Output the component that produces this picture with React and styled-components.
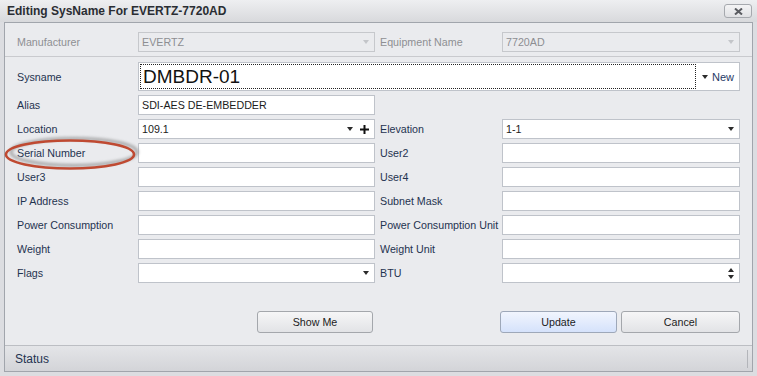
import React from "react";
import styled, { createGlobalStyle } from "styled-components";

const GlobalStyle = createGlobalStyle`
  html, body {
    margin: 0;
    padding: 0;
    background: #dfe0e3;
  }
  body {
    font-family: "Liberation Sans", Arial, sans-serif;
    font-size: 10.7px;
  }
`;

const Window = styled.div`
  position: relative;
  width: 757px;
  height: 376px;
  display: flex;
  flex-direction: column;
  background: #dcdde1;
  overflow: hidden;
`;

const TitleBar = styled.div`
  height: 22px;
  flex: none;
  display: flex;
  align-items: center;
  padding-left: 7px;
  background: linear-gradient(#eeeff1, #d8d9dc);
  color: #2a2d33;
  font-weight: bold;
  font-size: 12px;
`;

const CloseButton = styled.div`
  margin-left: auto;
  margin-right: 5px;
  width: 28px;
  height: 14px;
  box-sizing: border-box;
  border: 1px solid #a6a9ae;
  border-radius: 3px;
  background: linear-gradient(#f4f4f5, #e0e1e4);
  display: flex;
  align-items: center;
  justify-content: center;
`;

const Client = styled.div`
  flex: 1;
  margin: 0 4px 4px 4px;
  border: 1px solid #a1a5ac;
  background: #eaebee;
  display: flex;
  flex-direction: column;
`;

const TopPanel = styled.div`
  padding: 9px 12px 4px 12px;
  border-bottom: 1px solid #c9cace;
`;

const Form = styled.div`
  padding: 5px 12px 0 12px;
  display: flex;
  flex-direction: column;
  gap: 4px;
`;

const Row = styled.div`
  display: flex;
  align-items: center;
  gap: ${(p) => (p.$tight ? 0 : 5)}px;
`;

const Half = styled.div`
  display: flex;
  align-items: center;
  width: ${(p) => (p.$right ? 360 : 358)}px;
`;

const Label = styled.div`
  width: ${(p) => (p.$right ? 122 : 121)}px;
  flex: none;
  color: ${(p) => (p.$disabled ? "#8e8f93" : "#1f3350")};
  white-space: nowrap;
`;

const Field = styled.div`
  flex: 1;
  height: 20px;
  box-sizing: border-box;
  border: 1px solid ${(p) => (p.$disabled ? "#c6c8cc" : "#bfc3ca")};
  background: ${(p) => (p.$disabled ? "#eaebee" : "#ffffff")};
  color: ${(p) => (p.$disabled ? "#8d8e92" : "#1b1b1b")};
  display: flex;
  align-items: center;
  padding: 0 5px 0 3px;
  gap: 7px;
`;

const FieldText = styled.span`
  flex: 1;
  white-space: nowrap;
`;

const Caret = styled.span`
  width: 0;
  height: 0;
  border-left: 3.5px solid transparent;
  border-right: 3.5px solid transparent;
  ${(p) =>
    p.$up
      ? "border-bottom: 4px solid #2b2b2b;"
      : `border-top: 4px solid ${p.$disabled ? "#c3c5c9" : "#2b2b2b"};`}
`;

const Spin = styled.span`
  display: flex;
  flex-direction: column;
  gap: 3px;
`;

const SysField = styled.div`
  width: 602px;
  height: 29px;
  flex: none;
  box-sizing: border-box;
  border: 1px solid #bfc3ca;
  background: #fff;
  display: flex;
  align-items: stretch;
`;

const SysInput = styled.div`
  flex: 1;
  margin: 1px 0 1px 1px;
  outline: 1px dotted #222;
  outline-offset: -1px;
  display: flex;
  align-items: center;
  padding-left: 3px;
  font-size: 19px;
  color: #111;
`;

const NewButton = styled.div`
  width: 43px;
  flex: none;
  display: flex;
  align-items: center;
  gap: 4px;
  padding-left: 6px;
  box-sizing: border-box;
  color: #1f3a66;
  font-size: 11px;
`;

const ButtonRow = styled.div`
  margin-top: 28px;
  padding: 0 12px;
  display: flex;
  gap: 5px;
`;

const ButtonGroup = styled.div`
  width: ${(p) => p.$w}px;
  display: flex;
  justify-content: flex-end;
  gap: 4px;
  padding-right: ${(p) => p.$pr || 0}px;
  box-sizing: border-box;
`;

const Button = styled.div`
  width: ${(p) => p.$w || 117}px;
  height: 22px;
  box-sizing: border-box;
  border: 1px solid ${(p) => (p.$primary ? "#9ea8b9" : "#a4a7ac")};
  border-radius: 3px;
  background: ${(p) =>
    p.$primary
      ? "linear-gradient(#f1f5fe, #d5e2fb)"
      : "linear-gradient(#f6f6f7, #e2e3e6)"};
  display: flex;
  align-items: center;
  justify-content: center;
  color: #1c1c1c;
`;

const StatusBar = styled.div`
  margin-top: auto;
  height: 26px;
  box-sizing: border-box;
  border-top: 1px solid #bcbec3;
  background: linear-gradient(#e4e5e8, #d3d4d8);
  display: flex;
  align-items: center;
  padding: 0 4px 0 10px;
  color: #1f3350;
  font-size: 12px;
`;

const Grip = styled.div`
  margin-left: auto;
  width: 1px;
  height: 18px;
  background: #b3b5ba;
`;

const Annotation = styled.svg`
  position: absolute;
  left: 0;
  top: 134px;
  pointer-events: none;
`;

function Plus() {
  return (
    <svg width="9" height="9" viewBox="0 0 9 9">
      <rect x="3.5" y="0" width="2" height="9" fill="#111" />
      <rect x="0" y="3.5" width="9" height="2" fill="#111" />
    </svg>
  );
}

function TextRow({ left, right, leftValue, rightValue, leftCaret, rightCaret, rightSpin }) {
  return (
    <Row>
      <Half>
        <Label>{left}</Label>
        <Field>
          <FieldText>{leftValue}</FieldText>
          {leftCaret && <Caret />}
        </Field>
      </Half>
      {right && (
        <Half $right>
          <Label $right>{right}</Label>
          <Field>
            <FieldText>{rightValue}</FieldText>
            {rightCaret && <Caret />}
            {rightSpin && (
              <Spin>
                <Caret $up />
                <Caret />
              </Spin>
            )}
          </Field>
        </Half>
      )}
    </Row>
  );
}

export default function App() {
  return (
    <>
      <GlobalStyle />
      <Window>
        <TitleBar>
          Editing SysName For EVERTZ-7720AD
          <CloseButton>
            <svg width="9" height="7" viewBox="0 0 9 7">
              <path d="M1 0.5 L8 6.5 M8 0.5 L1 6.5" stroke="#5a5c61" strokeWidth="2" />
            </svg>
          </CloseButton>
        </TitleBar>
        <Client>
          <TopPanel>
            <Row>
              <Half>
                <Label $disabled>Manufacturer</Label>
                <Field $disabled>
                  <FieldText>EVERTZ</FieldText>
                  <Caret $disabled />
                </Field>
              </Half>
              <Half $right>
                <Label $right $disabled>Equipment Name</Label>
                <Field $disabled>
                  <FieldText>7720AD</FieldText>
                  <Caret $disabled />
                </Field>
              </Half>
            </Row>
          </TopPanel>
          <Form>
            <Row $tight>
              <Label>Sysname</Label>
              <SysField>
                <SysInput>DMBDR-01</SysInput>
                <NewButton>
                  <Caret />
                  New
                </NewButton>
              </SysField>
            </Row>
            <TextRow left="Alias" leftValue="SDI-AES DE-EMBEDDER" />
            <Row>
              <Half>
                <Label>Location</Label>
                <Field>
                  <FieldText>109.1</FieldText>
                  <Caret />
                  <Plus />
                </Field>
              </Half>
              <Half $right>
                <Label $right>Elevation</Label>
                <Field>
                  <FieldText>1-1</FieldText>
                  <Caret />
                </Field>
              </Half>
            </Row>
            <TextRow left="Serial Number" right="User2" />
            <TextRow left="User3" right="User4" />
            <TextRow left="IP Address" right="Subnet Mask" />
            <TextRow left="Power Consumption" right="Power Consumption Unit" />
            <TextRow left="Weight" right="Weight Unit" />
            <TextRow left="Flags" right="BTU" leftCaret rightSpin />
          </Form>
          <ButtonRow>
            <ButtonGroup $w={358} $pr={2}>
              <Button $w={116}>Show Me</Button>
            </ButtonGroup>
            <ButtonGroup $w={360}>
              <Button $primary $w={117}>Update</Button>
              <Button $w={119}>Cancel</Button>
            </ButtonGroup>
          </ButtonRow>
          <StatusBar>
            Status
            <Grip />
          </StatusBar>
        </Client>
        <Annotation width="150" height="44" viewBox="0 0 150 44">
          <defs>
            <filter id="blur" x="-20%" y="-50%" width="140%" height="200%">
              <feGaussianBlur stdDeviation="1.6" />
            </filter>
          </defs>
          <ellipse cx="74" cy="18" rx="63" ry="13.5" fill="none" stroke="#8a8a8a" strokeWidth="3" opacity="0.7" filter="url(#blur)" />
          <ellipse cx="70" cy="20.5" rx="64" ry="14" fill="none" stroke="#bf4a32" strokeWidth="2.6" />
        </Annotation>
      </Window>
    </>
  );
}
